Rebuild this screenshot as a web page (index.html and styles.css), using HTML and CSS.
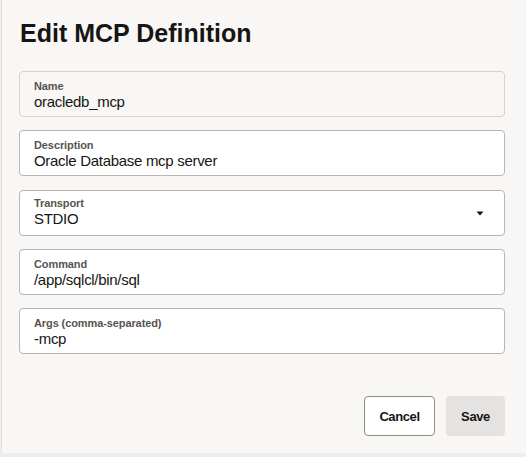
FILE: index.html
```html
<!DOCTYPE html>
<html>
<head>
<meta charset="utf-8">
<link rel="stylesheet" href="styles.css">
</head>
<body>
<div class="dialog">
  <h1 class="title">Edit MCP Definition</h1>
  <div class="fields">
    <div class="field readonly">
      <div class="label">Name</div>
      <div class="value">oracledb_mcp</div>
    </div>
    <div class="field">
      <div class="label">Description</div>
      <div class="value">Oracle Database mcp server</div>
    </div>
    <div class="field select">
      <div class="field-main">
        <div class="label">Transport</div>
        <div class="value">STDIO</div>
      </div>
      <svg class="caret" width="10" height="6" viewBox="0 0 10 6"><path d="M1.5 1.5h7L5 5.5z" fill="#161513"/></svg>
    </div>
    <div class="field">
      <div class="label">Command</div>
      <div class="value">/app/sqlcl/bin/sql</div>
    </div>
    <div class="field">
      <div class="label">Args (comma-separated)</div>
      <div class="value">-mcp</div>
    </div>
  </div>
  <div class="actions">
    <button class="btn btn-outline">Cancel</button>
    <button class="btn btn-solid">Save</button>
  </div>
</div>
</body>
</html>
```
FILE: styles.css
```css
html, body {
  margin: 0;
  padding: 0;
}
body {
  width: 526px;
  height: 457px;
  background: #efeeec;
  font-family: "Liberation Sans", Arial, sans-serif;
  color: #161513;
  overflow: hidden;
}
.dialog {
  margin-left: 1px;
  height: 453px;
  box-sizing: border-box;
  background: #f8f7f5;
  border-left: 1px solid #e4e2df;
  padding: 17px 21px 0 17px;
}
.title {
  margin: 0;
  font-size: 25px;
  font-weight: 700;
  line-height: 32px;
  color: #161513;
  padding-left: 1px;
}
.fields {
  margin-top: 22px;
  display: flex;
  flex-direction: column;
  gap: 13.25px;
}
.field {
  box-sizing: border-box;
  height: 46px;
  background: #ffffff;
  border: 1px solid #b9b6b1;
  border-radius: 4px;
  padding: 8px 14px 0 14px;
}
.field.readonly {
  background: #f8f7f5;
  border-color: #d6d3cf;
}
.field.select {
  display: flex;
  align-items: center;
  justify-content: space-between;
  padding-top: 0;
  padding-right: 19px;
}
.label {
  font-size: 11px;
  font-weight: 700;
  line-height: 13px;
  color: #58544f;
  letter-spacing: -0.1px;
}
.value {
  font-size: 15px;
  line-height: 18px;
  color: #161513;
  letter-spacing: -0.3px;
}
.caret {
  display: block;
}
.actions {
  margin-top: 42px;
  display: flex;
  justify-content: flex-end;
  gap: 11px;
}
.btn {
  font-family: "Liberation Sans", Arial, sans-serif;
  font-size: 13px;
  font-weight: 700;
  letter-spacing: -0.4px;
  color: #161513;
  height: 40px;
  border-radius: 4px;
  box-sizing: border-box;
  margin: 0;
  padding: 0;
}
.btn-outline {
  width: 71px;
  background: #ffffff;
  border: 1px solid #8f8b86;
}
.btn-solid {
  width: 59px;
  background: #e5e3e1;
  border: none;
}
```
